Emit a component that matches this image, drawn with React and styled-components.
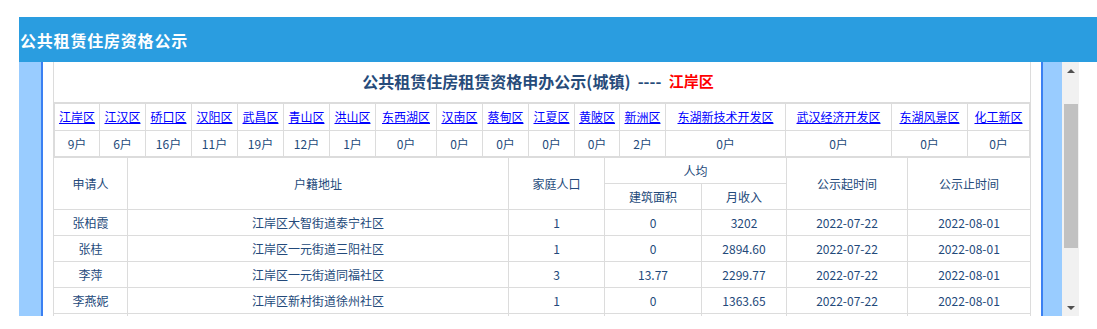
import React from "react";
import styled, { createGlobalStyle } from "styled-components";

const Global = createGlobalStyle`
  html, body { margin: 0; padding: 0; background: #fff; }
  body { font-family: "Noto Sans CJK SC", "Liberation Sans", sans-serif; }
`;

const TEXT = "#23497a";
const LINE = "#dcdcdc";

const Page = styled.div`
  padding: 17px 0 0 19px;
  width: 1078px;
`;

const Header = styled.div`
  height: 45px;
  background: #2a9de0;
  color: #fff;
  font-size: 16px;
  font-weight: bold;
  letter-spacing: 0.8px;
  display: flex;
  align-items: center;
  padding-left: 1px;
  box-sizing: border-box;
`;

const Frame = styled.div`
  display: flex;
  height: 254px;
`;

const LeftStrip = styled.div`
  width: 22px;
  background: #99ccff;
  border-right: 2px solid #3b80f2;
`;

const RightStrip = styled.div`
  width: 19px;
  background: #99ccff;
  border-left: 2px solid #3b80f2;
`;

const Main = styled.div`
  width: 998px;
  padding: 0 10px;
  box-sizing: border-box;
  background: #fff;
  overflow: hidden;
`;

const Box = styled.div`
  border-left: 1px solid ${LINE};
  border-right: 1px solid ${LINE};
  height: 100%;
  overflow: hidden;
`;

const Title = styled.div`
  height: 40px;
  display: flex;
  align-items: center;
  justify-content: center;
  padding: 0 8px 3px 0;
  box-sizing: border-box;
  font-size: 16px;
  font-weight: bold;
  color: #264b7a;
  white-space: pre;
`;

const Red = styled.span`
  color: #ff0000;
  font-size: 15px;
`;

const DistrictGrid = styled.div`
  display: grid;
  grid-template-columns: 44px 45px 45px 45px 45px 45px 45px 60px 45px 45px 45px 44px 45px 119px 105px 75px 61px;
  grid-template-rows: 26px 25px;
  gap: 1px;
  background: ${LINE};
  padding: 2px 1px 1px 1px;
`;

const Cell = styled.div`
  background: #fff;
  display: flex;
  align-items: center;
  justify-content: center;
  padding-bottom: 1px;
  box-sizing: border-box;
  font-size: 12px;
  color: ${TEXT};
  white-space: nowrap;
  overflow: hidden;
  grid-row: ${(p) => (p.$rows ? `span ${p.$rows}` : "auto")};
  grid-column: ${(p) => (p.$cols ? `span ${p.$cols}` : "auto")};
`;

const DistrictLink = styled.a`
  color: #0000ff;
  text-decoration: underline;
  font-size: 12px;
  cursor: pointer;
`;

const DataGrid = styled.div`
  display: grid;
  grid-template-columns: 73px 380px 95px 96px 84px 120px 122px;
  grid-auto-rows: 25px;
  gap: 1px;
  background: ${LINE};
  padding-top: 1px;
`;

const Scrollbar = styled.div`
  width: 17px;
  background: #f1f1f1;
  display: flex;
  flex-direction: column;
`;

const ArrowBtn = styled.div`
  height: 17px;
  display: flex;
  align-items: center;
  justify-content: center;
  &::after {
    content: "";
    width: 0;
    height: 0;
    border-left: 4px solid transparent;
    border-right: 4px solid transparent;
    ${(p) =>
      p.$down
        ? `border-top: 4px solid #505050;`
        : `border-bottom: 4px solid #505050;`}
  }
`;

const Track = styled.div`
  flex: 1;
  padding: 25px 1px 0 2px;
`;

const Thumb = styled.div`
  height: 144px;
  background: #c1c1c1;
`;

const districts = [
  ["江岸区", 9], ["江汉区", 6], ["硚口区", 16], ["汉阳区", 11], ["武昌区", 19],
  ["青山区", 12], ["洪山区", 1], ["东西湖区", 0], ["汉南区", 0], ["蔡甸区", 0],
  ["江夏区", 0], ["黄陂区", 0], ["新洲区", 2], ["东湖新技术开发区", 0],
  ["武汉经济开发区", 0], ["东湖风景区", 0], ["化工新区", 0],
];

const rows = [
  ["张柏霞", "江岸区大智街道泰宁社区", "1", "0", "3202", "2022-07-22", "2022-08-01"],
  ["张桂", "江岸区一元街道三阳社区", "1", "0", "2894.60", "2022-07-22", "2022-08-01"],
  ["李萍", "江岸区一元街道同福社区", "3", "13.77", "2299.77", "2022-07-22", "2022-08-01"],
  ["李燕妮", "江岸区新村街道徐州社区", "1", "0", "1363.65", "2022-07-22", "2022-08-01"],
  ["", "", "", "", "", "", ""],
];

export default function App() {
  return (
    <>
      <Global />
      <Page>
        <Header>公共租赁住房资格公示</Header>
        <Frame>
          <LeftStrip />
          <Main>
            <Box>
              <Title>
                公共租赁住房租赁资格申办公示(城镇)  ----  <Red>江岸区</Red>
              </Title>
              <DistrictGrid>
                {districts.map(([name]) => (
                  <Cell key={name}>
                    <DistrictLink>{name}</DistrictLink>
                  </Cell>
                ))}
                {districts.map(([name, n]) => (
                  <Cell key={name + "n"}>{n}户</Cell>
                ))}
              </DistrictGrid>
              <DataGrid>
                <Cell $rows={2}>申请人</Cell>
                <Cell $rows={2}>户籍地址</Cell>
                <Cell $rows={2}>家庭人口</Cell>
                <Cell $cols={2}>人均</Cell>
                <Cell $rows={2}>公示起时间</Cell>
                <Cell $rows={2}>公示止时间</Cell>
                <Cell>建筑面积</Cell>
                <Cell>月收入</Cell>
                {rows.map((r, i) =>
                  r.map((v, j) => <Cell key={i + "-" + j}>{v}</Cell>)
                )}
              </DataGrid>
            </Box>
          </Main>
          <RightStrip />
          <Scrollbar>
            <ArrowBtn />
            <Track>
              <Thumb />
            </Track>
            <ArrowBtn $down />
          </Scrollbar>
        </Frame>
      </Page>
    </>
  );
}
